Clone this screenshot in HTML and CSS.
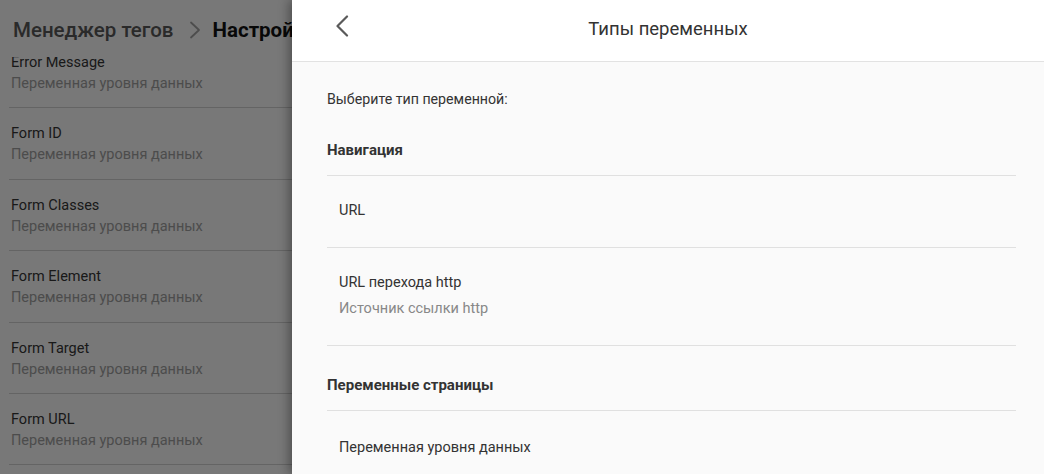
FILE: index.html
```html
<!DOCTYPE html>
<html lang="ru">
<head>
<meta charset="utf-8">
<title>Типы переменных</title>
<link rel="stylesheet" href="styles.css">
</head>
<body>
<div class="page">
  <header class="page-header">
    <span class="crumb">Менеджер тегов</span>
    <svg class="crumb-sep" width="12" height="18" viewBox="0 0 12 18"><path d="M2 1.5 L10 9 L2 16.5" fill="none" stroke="#9a9a9a" stroke-width="1.8" stroke-linecap="round" stroke-linejoin="round"/></svg>
    <span class="crumb-current">Настройки</span>
  </header>
  <ul class="var-list">
    <li class="var-item"><div class="var-name">Error Message</div><div class="var-type">Переменная уровня данных</div></li>
    <li class="var-item"><div class="var-name">Form ID</div><div class="var-type">Переменная уровня данных</div></li>
    <li class="var-item"><div class="var-name">Form Classes</div><div class="var-type">Переменная уровня данных</div></li>
    <li class="var-item"><div class="var-name">Form Element</div><div class="var-type">Переменная уровня данных</div></li>
    <li class="var-item"><div class="var-name">Form Target</div><div class="var-type">Переменная уровня данных</div></li>
    <li class="var-item"><div class="var-name">Form URL</div><div class="var-type">Переменная уровня данных</div></li>
  </ul>
</div>
<div class="scrim"></div>
<aside class="drawer">
  <div class="drawer-header">
    <button class="back" aria-label="Назад">
      <svg width="14" height="22" viewBox="0 0 14 22"><path d="M12 1.5 L2.5 11 L12 20.5" fill="none" stroke="#5a5a5a" stroke-width="2.2" stroke-linecap="round" stroke-linejoin="round"/></svg>
    </button>
    <h1 class="drawer-title">Типы переменных</h1>
  </div>
  <div class="drawer-body">
    <p class="intro">Выберите тип переменной:</p>
    <h2 class="section-title">Навигация</h2>
    <ul class="type-list">
      <li class="type-item"><div class="type-name">URL</div></li>
      <li class="type-item"><div class="type-name">URL перехода http</div><div class="type-desc">Источник ссылки http</div></li>
    </ul>
    <h2 class="section-title">Переменные страницы</h2>
    <ul class="type-list">
      <li class="type-item"><div class="type-name">Переменная уровня данных</div></li>
    </ul>
  </div>
</aside>
</body>
</html>
```
FILE: styles.css
```css
* { box-sizing: border-box; }
html, body { margin: 0; padding: 0; height: 100%; overflow: hidden; }
body {
  font-family: Roboto, "Noto Sans", "Liberation Sans", sans-serif;
  background: #f0f0f0;
  color: #333;
  position: relative;
}
.page { width: 100%; }
.page-header {
  position: relative;
  z-index: 1;
  height: 57px;
  background: #f0f0f0;
  display: flex;
  align-items: center;
  padding: 3px 0 0 13px;
  font-size: 20.5px;
  white-space: nowrap;
}
.crumb { color: #555; font-weight: 500; }
.crumb-sep { margin: 0 12px 0 15px; flex-shrink: 0; }
.crumb-current { color: #111; font-weight: 700; }
.var-list { list-style: none; margin: -20px 0 0 9px; padding: 0; }
.var-item {
  padding: 16px 0 12px 2px;
  border-bottom: 1px solid #c8c8c8;
  height: 71.4px;
}
.var-name { font-size: 14.5px; line-height: 20px; color: #333; }
.var-type { font-size: 14.5px; line-height: 20px; margin-top: 1px; color: #999; }
.scrim {
  position: absolute;
  inset: 0;
  background: rgba(0, 0, 0, 0.5);
  z-index: 2;
}
.drawer {
  position: absolute;
  top: 0; bottom: 0; right: 0;
  width: 752px;
  z-index: 3;
  background: #fafafa;
  box-shadow: -3px 0 10px rgba(0, 0, 0, 0.35);
  display: flex;
  flex-direction: column;
  overflow: hidden;
}
.drawer-header {
  flex-shrink: 0;
  height: 62px;
  background: #fff;
  border-bottom: 1px solid #e2e2e2;
  display: flex;
  align-items: center;
  position: relative;
  justify-content: center;
}
.back {
  position: absolute;
  left: 43px; top: 15px;
  width: 22px; height: 24px;
  padding: 0; border: 0; background: none;
  display: flex; align-items: flex-start; justify-content: flex-start;
}
.drawer-title {
  margin: 0 0 4px;
  font-size: 18.5px;
  font-weight: 400;
  color: #333;
}
.drawer-body { flex-shrink: 0; padding: 27px 28px 0 35px; }
.intro { margin: 0; font-size: 14.2px; line-height: 20px; color: #333; }
.section-title {
  margin: 0;
  padding: 29px 0 15px;
  font-size: 15px;
  line-height: 20px;
  font-weight: 700;
  color: #333;
  border-bottom: 1px solid #e0e0e0;
}
.intro + .section-title { padding-top: 31px; }
.type-list { list-style: none; margin: 0; padding: 0; }
.type-item {
  padding: 25px 12px 26px;
  border-bottom: 1px solid #e0e0e0;
}
.type-list:last-child .type-item { padding-top: 27px; }
.type-name { font-size: 14.5px; line-height: 20px; color: #333; }
.type-desc { font-size: 14.5px; line-height: 20px; margin-top: 6px; color: #888; }
```
